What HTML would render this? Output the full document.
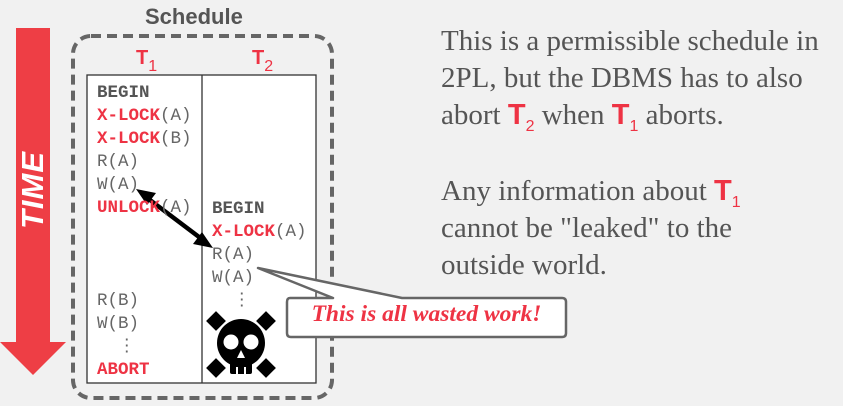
<!DOCTYPE html>
<html><head><style>
body{margin:0;width:843px;height:406px;background:#f1f1f1;position:relative;overflow:hidden;font-family:"Liberation Sans",sans-serif}
.a{position:absolute}
.m{font-family:"Liberation Mono",monospace;font-size:17.5px;color:#666;position:absolute;line-height:23.1px;white-space:pre}
.r{color:#ee3344;font-weight:bold}
.k{color:#555;font-weight:bold}
.p{font-family:"Liberation Serif",serif;font-size:29px;color:#555;line-height:37px;position:absolute;left:441px;white-space:nowrap}
.t{font-family:"Liberation Sans",sans-serif;color:#ee3344;font-weight:bold;line-height:0}
.t sub{font-size:16px;font-weight:normal;vertical-align:-7px;line-height:0}
</style></head><body>
<svg class="a" style="left:0;top:0" width="843" height="406">
<rect x="16" y="28" width="34" height="314" fill="#ee3e45"/>
<polygon points="0,342 66,342 33,375" fill="#ee3e45"/>
<rect x="73" y="36" width="259" height="362" rx="18" fill="none" stroke="#666" stroke-width="4" stroke-dasharray="10,6"/>
<rect x="87" y="75" width="229" height="308" fill="#fff" stroke="#333" stroke-width="1.3"/>
<line x1="202" y1="75" x2="202" y2="383" stroke="#333" stroke-width="1.3"/>
<line x1="146" y1="197" x2="203" y2="240" stroke="#000" stroke-width="4.5"/>
<polygon points="136,189 156,193 147,205" fill="#000"/>
<polygon points="213,248 193,244 202,232" fill="#000"/>
<path d="M258,268 L333,298 L290,298 Q287,298 287,302 L287,333 Q287,337 291,337 L562,337 Q566,337 566,333 L566,302 Q566,298 562,298 L402,298 Z" fill="#fff" stroke="#666" stroke-width="2.5" stroke-linejoin="round"/>
<g fill="#000">
<rect x="209" y="314" width="14" height="14" transform="rotate(45 216 321)"/>
<rect x="259" y="314" width="14" height="14" transform="rotate(45 266 321)"/>
<rect x="209" y="361" width="14" height="14" transform="rotate(45 216 368)"/>
<rect x="259" y="361" width="14" height="14" transform="rotate(45 266 368)"/>
<circle cx="241" cy="343" r="24"/>
<rect x="230" y="355" width="22" height="19" rx="2"/>
</g>
<circle cx="231" cy="342" r="7.5" fill="#fff"/>
<circle cx="251" cy="342" r="7.5" fill="#fff"/>
<polygon points="241,350 237,358 245,358" fill="#fff"/>
<rect x="236" y="367" width="2" height="7" fill="#fff"/><rect x="244" y="367" width="2" height="7" fill="#fff"/>
</svg>
<div class="a" style="left:-2px;top:177px;width:70px;transform:rotate(-90deg);color:#fff;font-weight:bold;font-style:italic;font-size:31px;text-align:center;line-height:34px;letter-spacing:1px">TIME</div>
<div class="a" style="left:145px;top:4px;font-size:22px;font-weight:bold;color:#555">Schedule</div>
<div class="a t" style="left:136px;top:58px;font-size:20px">T<sub>1</sub></div>
<div class="a t" style="left:252px;top:58px;font-size:20px">T<sub>2</sub></div>
<div class="m" style="left:97px;top:82px"><span class="k">BEGIN</span>
<span class="r">X-LOCK</span>(A)
<span class="r">X-LOCK</span>(B)
R(A)
W(A)
<span class="r">UNLOCK</span>(A)



R(B)
W(B)
  ⋮
<span class="r">ABORT</span></div>
<div class="m" style="left:212px;top:198px"><span class="k">BEGIN</span>
<span class="r">X-LOCK</span>(A)
R(A)
W(A)
  ⋮</div>
<div class="a" style="left:287px;top:301px;width:279px;text-align:center;font-family:'Liberation Serif',serif;font-style:italic;font-weight:bold;font-size:23.5px;color:#ee3344">This is all wasted work!</div>
<div class="p" style="top:23px">This is a permissible schedule in<br>2PL, but the DBMS has to also<br>abort <span class="t">T<sub>2</sub></span> when <span class="t">T<sub>1</sub></span> aborts.</div>
<div class="p" style="top:173px">Any information about <span class="t">T<sub>1</sub></span><br>cannot be "leaked" to the<br>outside world.</div>
</body></html>
